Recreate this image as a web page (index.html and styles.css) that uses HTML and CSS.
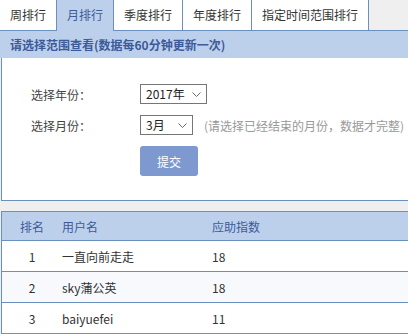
FILE: index.html
```html
<!DOCTYPE html>
<html>
    <head>
        <meta charset="utf-8">
        <title>排行</title>
        <link rel="stylesheet" href="styles.css">
    </head>
    <body>
        <div class="page">
            <ul class="tabs">
                <li>周排行</li>
                <li class="active">月排行</li>
                <li>季度排行</li>
                <li>年度排行</li>
                <li>指定时间范围排行</li>
            </ul>

            <div class="band">请选择范围查看(数据每60分钟更新一次)</div>

            <form class="panel">
                <div class="row">
                    <label>选择年份：</label>
                    <div class="select year">
                        <span>2017年</span>
                        <svg width="9" height="5" viewBox="0 0 9 5"><path d="M0.5 0.5 L4.5 4.5 L8.5 0.5" fill="none" stroke="#666" stroke-width="1"/></svg>
                    </div>
                </div>
                <div class="row">
                    <label>选择月份：</label>
                    <div class="select month">
                        <span>3月</span>
                        <svg width="9" height="5" viewBox="0 0 9 5"><path d="M0.5 0.5 L4.5 4.5 L8.5 0.5" fill="none" stroke="#666" stroke-width="1"/></svg>
                    </div>
                    <span class="hint">(请选择已经结束的月份，数据才完整)</span>
                </div>
                <div class="row">
                    <label></label>
                    <button type="button" class="submit">提交</button>
                </div>
            </form>

            <table class="rank">
                <thead>
                    <tr>
                        <th class="no">排名</th>
                        <th class="name">用户名</th>
                        <th>应助指数</th>
                    </tr>
                </thead>
                <tbody>
                    <tr><td class="no">1</td><td>一直向前走走</td><td>18</td></tr>
                    <tr class="alt"><td class="no">2</td><td>sky蒲公英</td><td>18</td></tr>
                    <tr><td class="no">3</td><td>baiyuefei</td><td>11</td></tr>
                </tbody>
            </table>
        </div>
    </body>
</html>
```

FILE: styles.css
```css
body {
    margin: 0;
    background: #efefef;
    font-family: "Noto Sans CJK SC", "Noto Sans", sans-serif;
    font-size: 12px;
    color: #333;
    overflow: hidden;
}

/* Tabs */

.tabs {
    display: flex;
    margin: 0;
    padding: 0;
    list-style: none;
    height: 30px;
    border-bottom: 1px solid #6b8fbe;
}

.tabs li {
    height: 30px;
    line-height: 30px;
    padding: 0 10px;
    background: #fff;
    border-right: 1px solid #6b8fbe;
    color: #333;
    white-space: nowrap;
}

.tabs li.active {
    height: 31px;
    background: #bcd0ec;
    color: #3d5a99;
}

.band {
    height: 27px;
    line-height: 27px;
    padding-left: 10px;
    background: #bcd0ec;
    color: #3d5a99;
    font-weight: bold;
}

/* Form */

.panel {
    margin: 0 0 0 1px;
    padding: 26px 0 24px 29px;
    background: #fff;
    border-left: 1px solid #6b8fbe;
    border-bottom: 1px solid #6b8fbe;
    display: flex;
    flex-direction: column;
    gap: 11px;
}

.row {
    display: flex;
    align-items: center;
    white-space: nowrap;
}

.row label {
    width: 109px;
    flex: none;
    color: #444;
}

.select {
    position: relative;
    flex: none;
    box-sizing: border-box;
    height: 20px;
    border: 1px solid #767676;
    padding-left: 5px;
    line-height: 18px;
    background: #fff;
    color: #222;
}

.select svg {
    position: absolute;
    top: 7px;
    right: 5px;
}

.year {
    width: 67px;
}

.month {
    width: 53px;
}

.hint {
    margin-left: 11px;
    color: #999;
}

.submit {
    width: 58px;
    height: 30px;
    border: 0;
    border-radius: 3px;
    background: #7d99cf;
    color: #fff;
    font-family: inherit;
    font-size: 12px;
}

/* Table */

.rank {
    margin: 10px 0 0 1px;
    width: calc(100% - 1px);
    border-collapse: collapse;
    background: #fff;
    border-left: 1px solid #6b8fbe;
    border-top: 1px solid #6b8fbe;
}

.rank th {
    height: 28px;
    background: #bcd0ec;
    color: #3d5a99;
    font-weight: normal;
    text-align: left;
    padding: 0;
    border-bottom: 1px solid #6b8fbe;
}

.rank td {
    height: 30px;
    padding: 0;
    border-bottom: 1px solid #6b8fbe;
}

.rank .no {
    width: 60px;
    text-align: center;
}

.rank .name {
    width: 150px;
}

.rank tr.alt td {
    background: #f7f9fc;
}
```
